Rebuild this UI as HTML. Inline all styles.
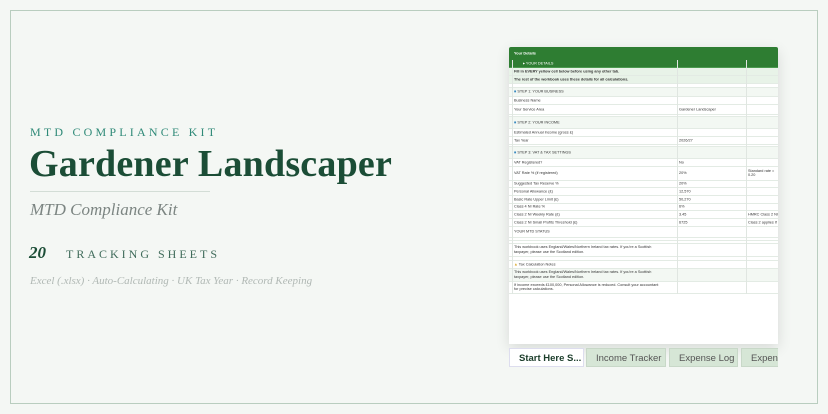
<!DOCTYPE html>
<html><head><style>
*{margin:0;padding:0;box-sizing:border-box}
body{width:828px;height:414px;background:#f4f7f4;position:relative;overflow:hidden;font-family:"Liberation Serif",serif}
.frame{position:absolute;left:10px;top:10px;width:808px;height:394px;border:1px solid #b9cdbf}
.t1{position:absolute;left:30px;top:125px;font-size:12px;letter-spacing:3.2px;color:#2f8a78}
.t2{position:absolute;left:29px;top:142px;font-size:38px;font-weight:bold;color:#1b4d36;letter-spacing:0.2px}
.hr{position:absolute;left:30px;top:191px;width:180px;height:1px;background:#d3ddd6}
.t3{position:absolute;left:30px;top:200px;font-size:17px;font-style:italic;color:#7c8582}
.t4{position:absolute;left:29px;top:243px;font-size:17px;font-weight:bold;font-style:italic;color:#1b4d36}
.t5{position:absolute;left:66px;top:247px;font-size:12px;letter-spacing:3px;color:#3f6b5a}
.t6{position:absolute;left:30px;top:275px;font-size:11px;font-style:italic;color:#b0b8b4}
.sheet{position:absolute;left:509px;top:47px;width:269px;height:297px;background:#fff;box-shadow:0 4px 14px rgba(0,0,0,.12);overflow:hidden;border-radius:2px 2px 0 0;font-family:"Liberation Sans",sans-serif;font-size:3.8px;color:#333}
.r{position:absolute;left:0;width:269px;border-bottom:1px solid #e3ebe4}
.r span{position:absolute;top:50%;transform:translateY(-50%);line-height:1.3}
.a{left:5px}.b{left:170px}.c{left:239px}
.v{position:absolute;top:13px;bottom:50px;width:1px;background:#e0e6e1}
.tabs{position:absolute;left:509px;top:348px;width:269px;height:19px;overflow:hidden;font-family:"Liberation Sans",sans-serif;font-size:9.5px}
.tab{position:absolute;top:0;height:19px;background:#d6e6d6;color:#555;padding:4px 0 0 9px;white-space:nowrap;border:1px solid #c8d8c8}
</style></head><body>
<div class="frame"></div>
<div class="t1">MTD COMPLIANCE KIT</div>
<div class="t2">Gardener Landscaper</div>
<div class="hr"></div>
<div class="t3">MTD Compliance Kit</div>
<div class="t4">20</div>
<div class="t5">TRACKING SHEETS</div>
<div class="t6">Excel (.xlsx) · Auto-Calculating · UK Tax Year · Record Keeping</div>
<div class="sheet">
<div class="r" style="top:0;height:14px;background:#2e7d32;color:#fff;font-weight:bold;border:0"><span class="a">Your Details</span></div>
<div class="r" style="top:14px;height:7px;background:#2e7d32;color:#fff;border-color:#4b9a4f"><span class="a" style="left:14px">▸ YOUR DETAILS</span></div>
<div class="r" style="top:21px;height:8px;background:#e8f3e8;font-weight:bold"><span class="a">Fill in EVERY yellow cell below before using any other tab.</span></div>
<div class="r" style="top:29px;height:8px;background:#e8f3e8;font-weight:bold"><span class="a">The rest of the workbook uses these details for all calculations.</span></div>
<div class="r" style="top:37px;height:4px"></div>
<div class="r" style="top:41px;height:9px;background:#f3f8f3"><span class="a"><b style="color:#3a8ac0">■</b> STEP 1: YOUR BUSINESS</span></div>
<div class="r" style="top:50px;height:8px"><span class="a">Business Name</span></div>
<div class="r" style="top:58px;height:10px"><span class="a">Your Service Area</span><span class="b">Gardener Landscaper</span></div>
<div class="r" style="top:68px;height:2px"></div>
<div class="r" style="top:70px;height:12px;background:#f3f8f3"><span class="a"><b style="color:#3a8ac0">■</b> STEP 2: YOUR INCOME</span></div>
<div class="r" style="top:82px;height:8px"><span class="a">Estimated Annual Income (gross £)</span></div>
<div class="r" style="top:90px;height:8px"><span class="a">Tax Year</span><span class="b">2026/27</span></div>
<div class="r" style="top:98px;height:2px"></div>
<div class="r" style="top:100px;height:12px;background:#f3f8f3"><span class="a"><b style="color:#3a8ac0">■</b> STEP 3: VAT &amp; TAX SETTINGS</span></div>
<div class="r" style="top:112px;height:8px"><span class="a">VAT Registered?</span><span class="b">No</span></div>
<div class="r" style="top:120px;height:14px"><span class="a" style="top:4px;transform:none">VAT Rate % (if registered)</span><span class="b" style="top:4px;transform:none">20%</span><span class="c">Standard rate = 0.20</span></div>
<div class="r" style="top:134px;height:7px"><span class="a">Suggested Tax Reserve %</span><span class="b">20%</span></div>
<div class="r" style="top:141px;height:8px"><span class="a">Personal Allowance (£)</span><span class="b">12,570</span></div>
<div class="r" style="top:149px;height:8px"><span class="a">Basic Rate Upper Limit (£)</span><span class="b">50,270</span></div>
<div class="r" style="top:157px;height:7px"><span class="a">Class 4 NI Rate %</span><span class="b">6%</span></div>
<div class="r" style="top:164px;height:8px"><span class="a">Class 2 NI Weekly Rate (£)</span><span class="b">3.45</span><span class="c">HMRC Class 2 NI</span></div>
<div class="r" style="top:172px;height:8px"><span class="a">Class 2 NI Small Profits Threshold (£)</span><span class="b">6725</span><span class="c">Class 2 applies if</span></div>
<div class="r" style="top:180px;height:11px"><span class="a">YOUR MTD STATUS</span></div>
<div class="r" style="top:191px;height:3px"></div>
<div class="r" style="top:194px;height:3px"></div>
<div class="r" style="top:197px;height:13px"><span class="a">This workbook uses England/Wales/Northern Ireland tax rates. If you're a Scottish<br>taxpayer, please use the Scotland edition.</span></div>
<div class="r" style="top:210px;height:4px"></div>
<div class="r" style="top:214px;height:8px"><span class="a"><b style="color:#d9a520">▲</b> Tax Calculation Notes</span></div>
<div class="r" style="top:222px;height:13px;background:#f3f8f3"><span class="a">This workbook uses England/Wales/Northern Ireland tax rates. If you're a Scottish<br>taxpayer, please use the Scotland edition.</span></div>
<div class="r" style="top:235px;height:12px"><span class="a">If income exceeds £100,000, Personal Allowance is reduced. Consult your accountant<br>for precise calculations.</span></div>
<div class="v" style="left:168px"></div><div class="v" style="left:237px"></div><div class="v" style="left:3px"></div>
</div>
<div class="tabs">
<div class="tab" style="left:0;width:75px;background:#fff;color:#1b3d2a;font-weight:bold;border-color:#dde">Start Here S...</div>
<div class="tab" style="left:77px;width:80px">Income Tracker</div>
<div class="tab" style="left:160px;width:69px">Expense Log</div>
<div class="tab" style="left:232px;width:60px">Expens</div>
</div>
</body></html>
